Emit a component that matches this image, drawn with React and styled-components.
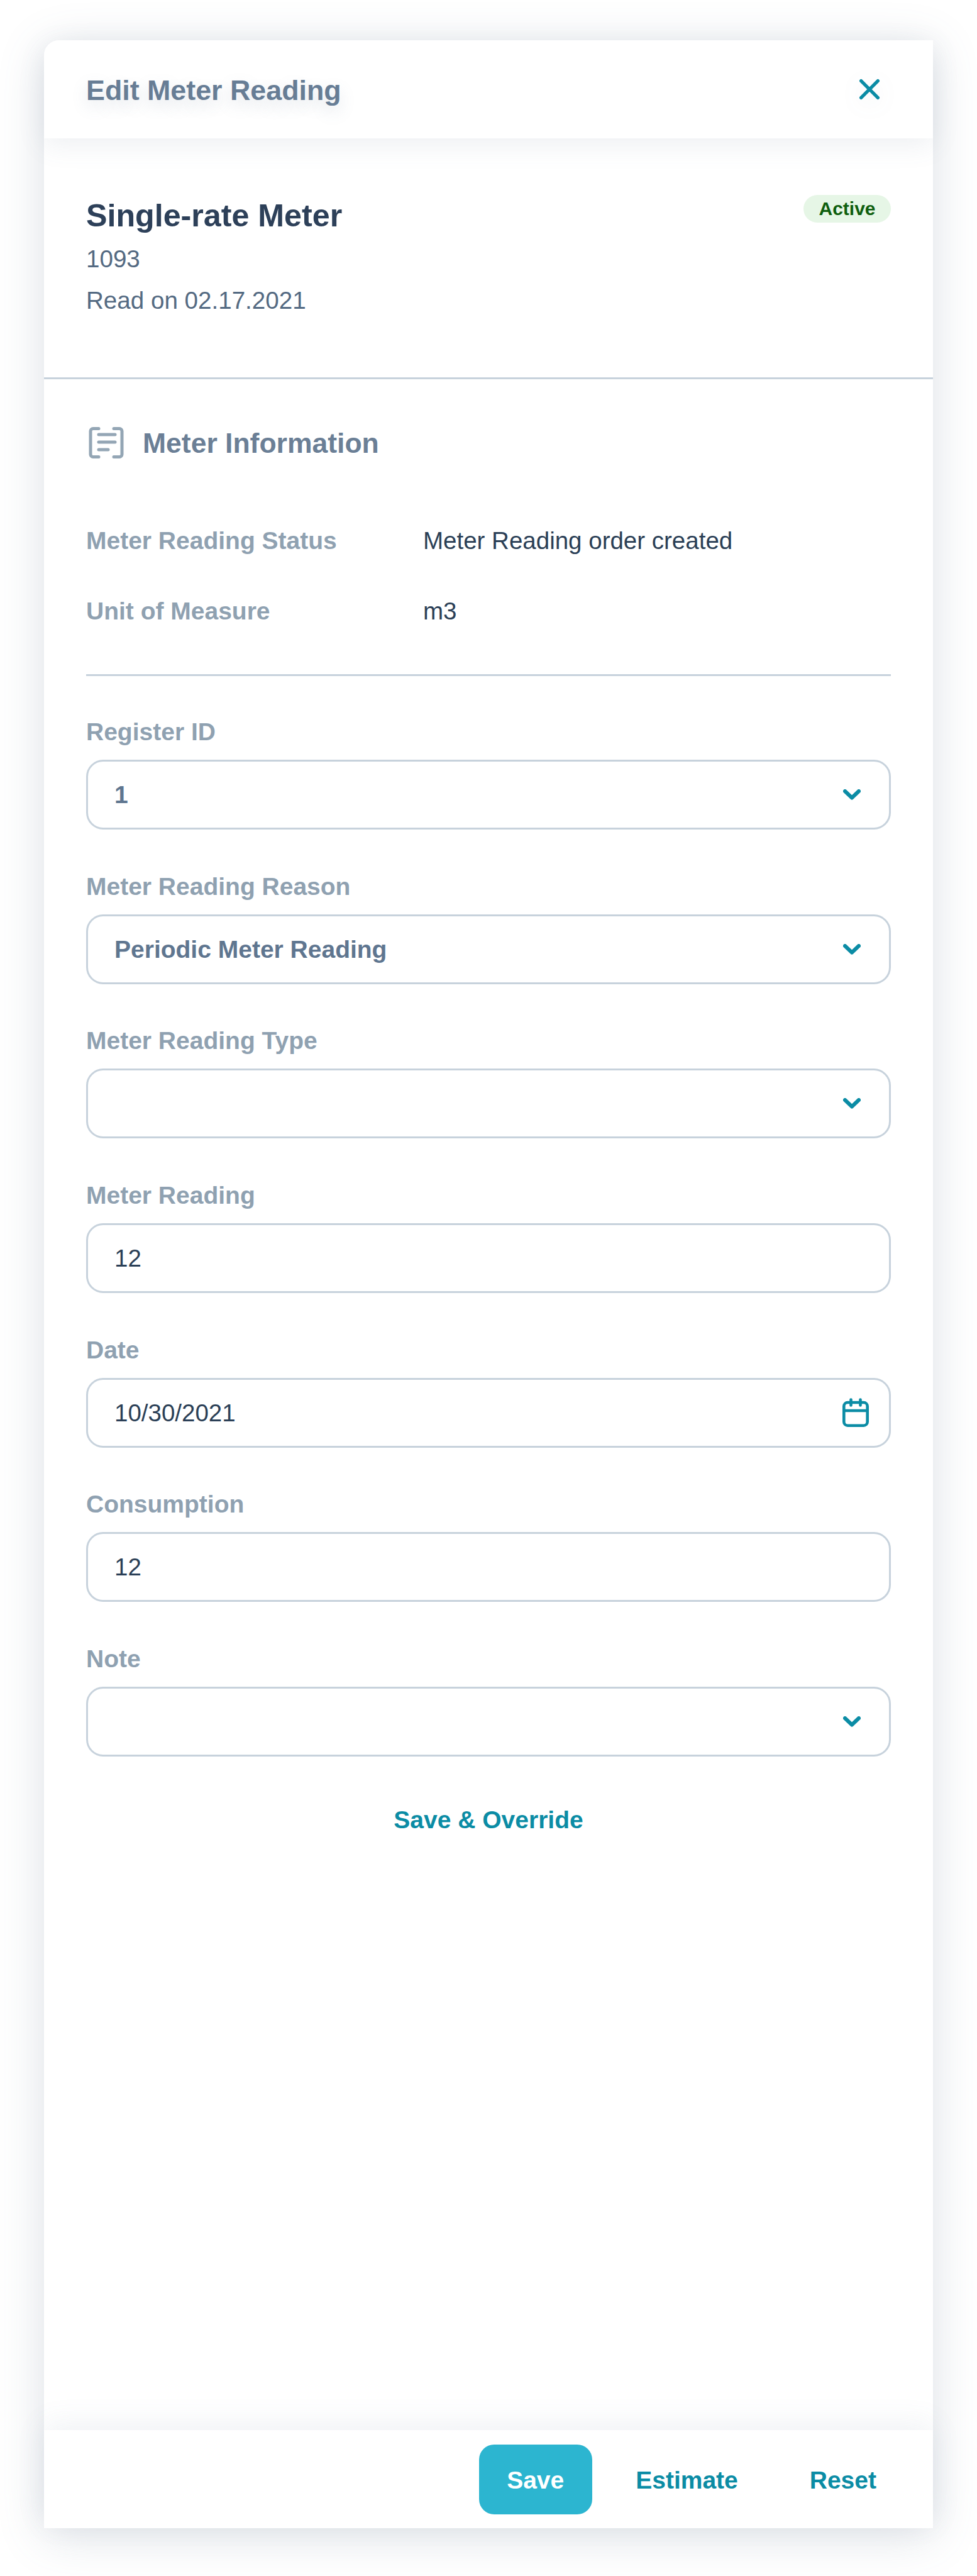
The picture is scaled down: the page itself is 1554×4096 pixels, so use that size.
import React from "react";
import styled, { createGlobalStyle } from "styled-components";

const Global = createGlobalStyle`
  * { box-sizing: border-box; }
  html, body { margin: 0; padding: 0; background: #fff; }
  body { font-family: "Liberation Sans", Arial, sans-serif; }
`;

const Page = styled.div`
  width: 1554px;
  height: 4096px;
  padding: 64px 70px 76px;
  background: #fff;
  overflow: hidden;
`;

const Panel = styled.section`
  width: 1414px;
  height: 3956px;
  display: flex;
  flex-direction: column;
  background: #fff;
  border-top-left-radius: 24px;
  box-shadow: 0 12px 76px rgba(80, 100, 125, 0.2);
`;

const Header = styled.header`
  position: relative;
  z-index: 1;
  flex: 0 0 156px;
  display: flex;
  align-items: center;
  justify-content: space-between;
  padding: 2px 69px 0 67px;
  background: #fff;
  border-top-left-radius: 24px;
  box-shadow: 0 10px 44px rgba(90, 110, 140, 0.11);
`;

const HeaderTitle = styled.h1`
  margin: 0;
  font-size: 44.8px;
  line-height: 52px;
  font-weight: 700;
  color: #677d95;
  text-shadow: 0 10px 26px rgba(90, 110, 140, 0.18);
`;

const CloseIcon = styled.svg`
  display: block;
  width: 64px;
  height: 64px;
  margin-top: -2px;
  fill: none;
  stroke: #0b8ca5;
  stroke-width: 2;
  stroke-linecap: round;
  filter: drop-shadow(0 8px 16px rgba(90, 110, 140, 0.1));
`;

const Body = styled.div`
  flex: 1;
  min-height: 0;
`;

const Summary = styled.div`
  display: flex;
  align-items: flex-start;
  justify-content: space-between;
  padding: 90px 67px 90px;
  border-bottom: 3px solid #c7d2dc;
  height: 383px;
`;

const SummaryText = styled.div`
  padding-top: 4px;
`;

const MeterName = styled.h2`
  margin: 0 0 7px;
  font-size: 50.2px;
  line-height: 58px;
  font-weight: 700;
  color: #2d4059;
`;

const MetaLine = styled.div`
  font-size: 38.6px;
  line-height: 65.5px;
  color: #546a82;
`;

const Badge = styled.span`
  display: flex;
  align-items: center;
  justify-content: center;
  width: 139px;
  height: 44px;
  border-radius: 22px;
  background: #e6f6e6;
  color: #0e5e0e;
  font-size: 30px;
  font-weight: 700;
`;

const Details = styled.div`
  padding: 69px 67px 0;
`;

const SectionHead = styled.div`
  display: flex;
  align-items: center;
  gap: 30px;
  height: 64px;
  padding-left: 4px;
  margin-bottom: 101px;
`;

const SectionIcon = styled.svg`
  display: block;
  flex: none;
  width: 56px;
  height: 50px;
  fill: none;
  stroke: #94a6b5;
  stroke-width: 5;
  stroke-linecap: round;
`;

const SectionTitle = styled.h3`
  margin: 2px 0 0;
  font-size: 44.5px;
  line-height: 52px;
  font-weight: 700;
  color: #6b7f96;
`;

const InfoList = styled.div`
  display: flex;
  flex-direction: column;
  gap: 66px;
  padding-bottom: 77px;
  border-bottom: 3px solid #c7d2dc;
`;

const InfoRow = styled.div`
  display: grid;
  grid-template-columns: 536px 1fr;
  line-height: 46px;
`;

const InfoLabel = styled.span`
  font-size: 39px;
  font-weight: 700;
  color: #8fa1b1;
`;

const InfoValue = styled.span`
  font-size: 38.5px;
  color: #2b3f56;
`;

const Form = styled.div`
  display: flex;
  flex-direction: column;
  gap: 67.67px;
  padding-top: 66px;
`;

const Field = styled.div`
  display: flex;
  flex-direction: column;
`;

const FieldLabel = styled.label`
  margin-bottom: 21px;
  font-size: 39px;
  line-height: 46px;
  font-weight: 700;
  color: #8fa1b1;
`;

const Control = styled.div`
  display: flex;
  align-items: center;
  justify-content: space-between;
  height: 111px;
  padding: 0 ${(p) => p.$right}px 0 42px;
  border: 3px solid #c7d2dc;
  border-radius: 27px;
  background: #fff;
`;

const ControlText = styled.span`
  padding-top: 1px;
  font-size: ${(p) => (p.$strong ? 39 : 38.5)}px;
  line-height: 46px;
  font-weight: ${(p) => (p.$strong ? 700 : 400)};
  color: ${(p) => (p.$strong ? "#5f7690" : "#2b3f56")};
`;

const Chevron = styled.svg`
  display: block;
  width: 28px;
  height: 17px;
  fill: none;
  stroke: #0b8ca5;
  stroke-width: 6;
  stroke-linecap: round;
  stroke-linejoin: round;
`;

const Calendar = styled.svg`
  display: block;
  width: 42px;
  height: 46px;
  fill: none;
  stroke: #0b8ca5;
  stroke-width: 4.6;
  stroke-linecap: round;
  stroke-linejoin: round;
`;

const OverrideButton = styled.button`
  display: block;
  width: 100%;
  margin-top: 78px;
  padding: 0;
  border: 0;
  background: none;
  font: 700 39px/46px "Liberation Sans", Arial, sans-serif;
  color: #0b8ca5;
`;

const Footer = styled.footer`
  position: relative;
  z-index: 1;
  flex: 0 0 156px;
  display: flex;
  align-items: center;
  justify-content: flex-end;
  padding-right: 33px;
  background: #fff;
  box-shadow: 0 -10px 44px rgba(90, 110, 140, 0.09);
`;

const PrimaryButton = styled.button`
  width: 180px;
  height: 111px;
  margin-right: 12.5px;
  padding: 3px 0 0;
  border: 0;
  border-radius: 24px;
  background: #2cb5d0;
  color: #fff;
  font: 700 39px/46px "Liberation Sans", Arial, sans-serif;
`;

const GhostButton = styled.button`
  padding: 3px 57px 0;
  height: 111px;
  border: 0;
  background: none;
  color: #0b8ca5;
  font: 700 39px/46px "Liberation Sans", Arial, sans-serif;
`;

const ChevronDown = () => (
  <Chevron viewBox="0 0 28 17">
    <path d="M3 3l11 10.5L25 3" />
  </Chevron>
);

const CalendarGlyph = () => (
  <Calendar viewBox="0 0 42 46">
    <rect x="2.3" y="7" width="37.4" height="36.7" rx="6" />
    <path d="M2.3 20h37.4M13.5 2.5v9M28.5 2.5v9" />
  </Calendar>
);

const fields = [
  { label: "Register ID", value: "1", strong: true, icon: "chevron" },
  { label: "Meter Reading Reason", value: "Periodic Meter Reading", strong: true, icon: "chevron" },
  { label: "Meter Reading Type", value: "", icon: "chevron" },
  { label: "Meter Reading", value: "12" },
  { label: "Date", value: "10/30/2021", icon: "calendar" },
  { label: "Consumption", value: "12" },
  { label: "Note", value: "", icon: "chevron" },
];

const rightPad = { chevron: 45, calendar: 32 };

export default function App() {
  return (
    <Page>
      <Global />
      <Panel>
        <Header>
          <HeaderTitle>Edit Meter Reading</HeaderTitle>
          <CloseIcon viewBox="0 0 24 24">
            <path d="M17 7 7 17M7 7l10 10" />
          </CloseIcon>
        </Header>
        <Body>
          <Summary>
            <SummaryText>
              <MeterName>Single-rate Meter</MeterName>
              <MetaLine>1093</MetaLine>
              <MetaLine>Read on 02.17.2021</MetaLine>
            </SummaryText>
            <Badge>Active</Badge>
          </Summary>
          <Details>
            <SectionHead>
              <SectionIcon viewBox="0 0 56 50">
                <path d="M16 2.5H7a4 4 0 0 0-4 4v37a4 4 0 0 0 4 4h9M40 2.5h9a4 4 0 0 1 4 4v37a4 4 0 0 1-4 4h-9" />
                <path d="M16 12h26M16 24h26M16 36h15" />
              </SectionIcon>
              <SectionTitle>Meter Information</SectionTitle>
            </SectionHead>
            <InfoList>
              <InfoRow>
                <InfoLabel>Meter Reading Status</InfoLabel>
                <InfoValue>Meter Reading order created</InfoValue>
              </InfoRow>
              <InfoRow>
                <InfoLabel>Unit of Measure</InfoLabel>
                <InfoValue>m3</InfoValue>
              </InfoRow>
            </InfoList>
            <Form>
              {fields.map((f) => (
                <Field key={f.label}>
                  <FieldLabel>{f.label}</FieldLabel>
                  <Control $right={rightPad[f.icon] || 43}>
                    <ControlText $strong={f.strong}>{f.value}</ControlText>
                    {f.icon === "chevron" && <ChevronDown />}
                    {f.icon === "calendar" && <CalendarGlyph />}
                  </Control>
                </Field>
              ))}
            </Form>
            <OverrideButton>Save &amp; Override</OverrideButton>
          </Details>
        </Body>
        <Footer>
          <PrimaryButton>Save</PrimaryButton>
          <GhostButton>Estimate</GhostButton>
          <GhostButton>Reset</GhostButton>
        </Footer>
      </Panel>
    </Page>
  );
}
